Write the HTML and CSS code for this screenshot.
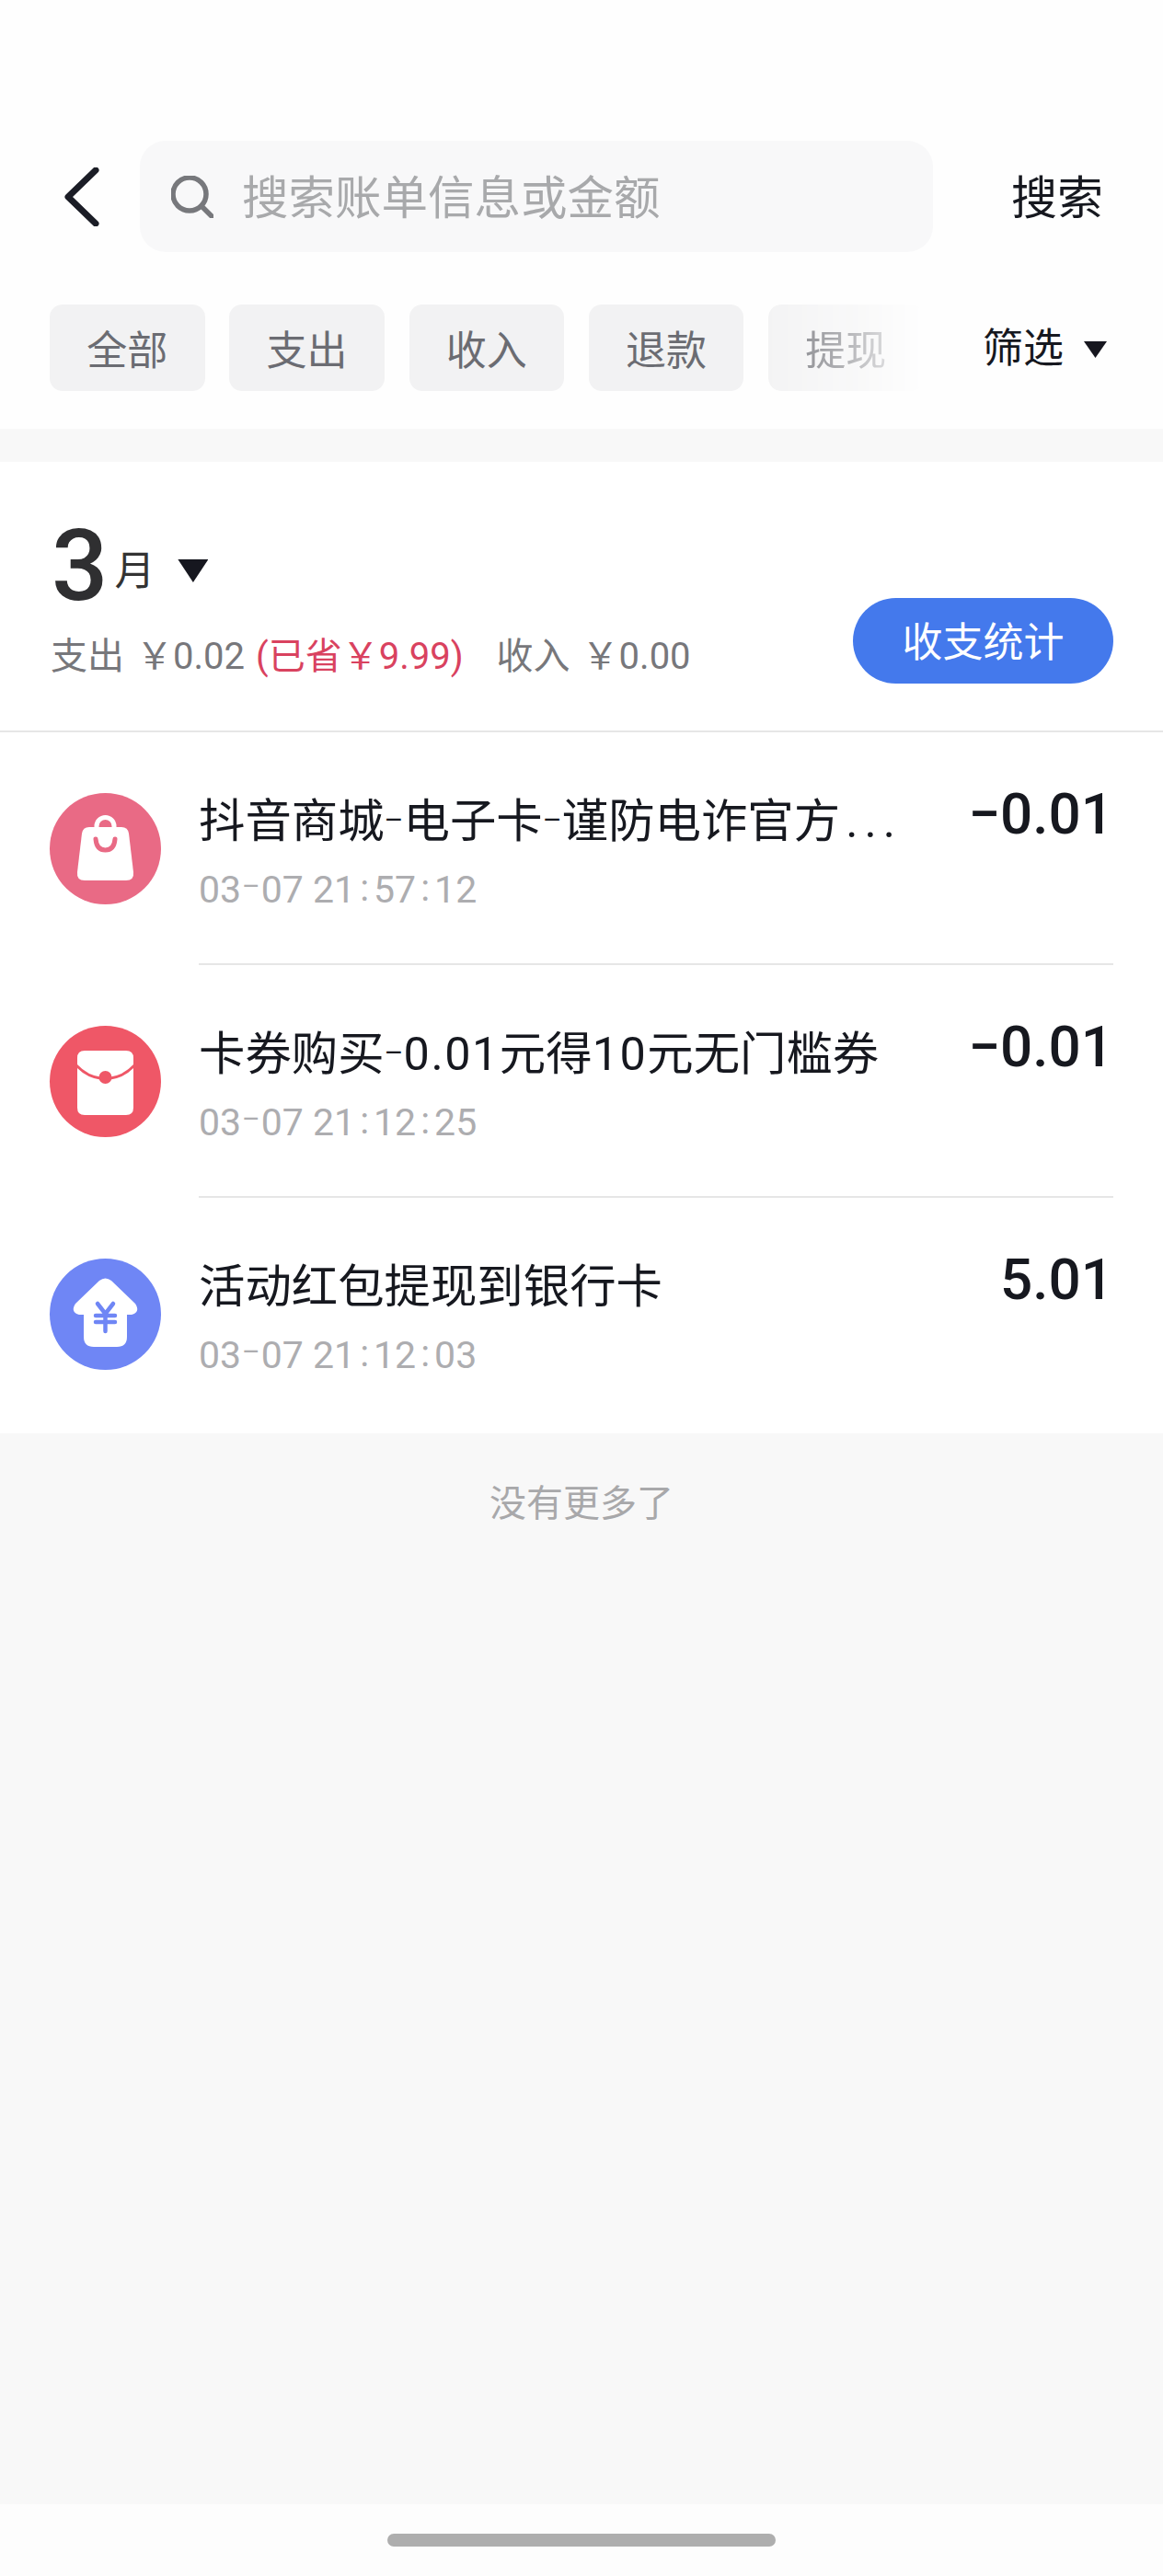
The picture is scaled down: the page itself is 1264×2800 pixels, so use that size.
FILE: index.html
```html
<!DOCTYPE html>
<html lang="zh-CN">
<head>
    <meta charset="UTF-8">
    <meta name="viewport" content="width=device-width, initial-scale=1.0">
    <title>账单</title>
    <link rel="stylesheet" href="styles.css">
</head>
<body>
    <div class="page">
        <header class="top">
            <div class="search-row">
                <svg class="back" viewBox="0 0 38 64"><path d="M34 3 L4 32 L34 61"/></svg>
                <div class="search-box">
                    <svg class="search-icon" viewBox="0 0 46 46"><circle cx="20" cy="20" r="18"/><path d="M33 33 L44 44"/></svg>
                    <span class="placeholder">搜索账单信息或金额</span>
                </div>
                <span class="search-btn">搜索</span>
            </div>
            <div class="filter-row">
                <ul class="chips">
                    <li>全部</li>
                    <li>支出</li>
                    <li>收入</li>
                    <li>退款</li>
                    <li>提现</li>
                </ul>
                <div class="filter">筛选<i class="tri tri-small"></i></div>
            </div>
        </header>

        <section class="bill">
            <div class="summary">
                <div>
                    <div class="month"><b>3</b><span>月</span><i class="tri tri-big"></i></div>
                    <div class="totals">
                        <span>支出</span><span class="money">￥0.02</span><span class="saved">(已省￥9.99)</span><span class="income">收入</span><span class="money">￥0.00</span>
                    </div>
                </div>
                <a class="stats-btn">收支统计</a>
            </div>

            <ul class="records">
                <li class="record">
                    <span class="badge badge-shop">
                        <svg viewBox="0 0 121 121"><path d="M51 38 V36 a9.500 9.500 0 0 1 19 0 V38" fill="none" stroke="#fff" stroke-width="5"/><path d="M43 37 H78 Q85 37 86 44 L91 86 Q92 95 83 95 H38 Q29 95 30 86 L35 44 Q36 37 43 37 Z" fill="#fff"/><path d="M50 50 Q51 62 60.500 62 Q70 62 71 50" fill="none" stroke="#e96a85" stroke-width="5" stroke-linecap="round"/></svg>
                    </span>
                    <div class="info">
                        <p class="name">抖音商城<i class="dash">–</i>电子卡<i class="dash">–</i>谨防电诈官方<span class="dots">...</span></p>
                        <p class="time">03<i class="dash">–</i>07 21<i class="colon">:</i>57<i class="colon">:</i>12</p>
                    </div>
                    <span class="amount">−0.01</span>
                </li>
                <li class="record">
                    <span class="badge badge-gift">
                        <svg viewBox="0 0 121 121"><path d="M38 27 H83 Q91 27 91 35 V42 Q80 54 64 56 H57 Q41 54 30 42 V35 Q30 27 38 27 Z" fill="#fff"/><path d="M30 46 Q41 57 57 59 H64 Q80 57 91 46 V89 Q91 97 83 97 H38 Q30 97 30 89 Z" fill="#fff"/><circle cx="60.500" cy="56" r="7" fill="#ef5767"/></svg>
                    </span>
                    <div class="info">
                        <p class="name">卡券购买<i class="dash">–</i><span class="num">0.01</span>元得<span class="num">10</span>元无门槛券</p>
                        <p class="time">03<i class="dash">–</i>07 21<i class="colon">:</i>12<i class="colon">:</i>25</p>
                    </div>
                    <span class="amount">−0.01</span>
                </li>
                <li class="record">
                    <span class="badge badge-cash">
                        <svg viewBox="0 0 121 121"><path d="M54 24 Q60.500 19 67 24 L93 49 Q99 58 89 61 H84 V85 Q84 96 73 96 H48 Q37 96 37 85 V61 H32 Q22 58 28 49 Z" fill="#fff"/><path d="M52 49 L60.500 60 L69 49 M50 62 H71 M50 69 H71 M60.500 60 V79" fill="none" stroke="#6f86f5" stroke-width="4.500" stroke-linecap="round"/></svg>
                    </span>
                    <div class="info">
                        <p class="name">活动红包提现到银行卡</p>
                        <p class="time">03<i class="dash">–</i>07 21<i class="colon">:</i>12<i class="colon">:</i>03</p>
                    </div>
                    <span class="amount">5.01</span>
                </li>
            </ul>
        </section>

        <p class="no-more">没有更多了</p>

        <div class="home-area"><span class="home-bar"></span></div>
    </div>
</body>
</html>
```

FILE: styles.css
```css
*{
    margin: 0;
    padding: 0;
    box-sizing: border-box;
    list-style: none;
}

body{
    background-color: #f8f8f8;
    font-family: "Roboto", "Noto Sans CJK SC", sans-serif;
    color: #16181f;
}

.page{
    height: 2800px;
    display: flex;
    flex-direction: column;
}

/* search and filters */
.top{
    height: 466px;
    background-color: #fefefe;
    padding-top: 153px;
}

.search-row{
    display: flex;
    align-items: center;
    height: 121px;
    padding-left: 70px;
}

.back{
    width: 38px;
    height: 64px;
    fill: none;
    stroke: #1b1d26;
    stroke-width: 7;
    stroke-linecap: round;
    stroke-linejoin: round;
}

.search-box{
    width: 862px;
    height: 121px;
    margin-left: 44px;
    padding-left: 34px;
    border-radius: 28px;
    background-color: #f8f8f9;
    display: flex;
    align-items: center;
}

.search-icon{
    width: 46px;
    height: 46px;
    fill: none;
    stroke: #77787c;
    stroke-width: 5.500;
    stroke-linecap: round;
}

.placeholder{
    margin-left: 31px;
    margin-top: -6px;
    font-size: 50.500px;
    color: #a8a9ab;
}

.search-btn{
    margin-left: 85px;
    margin-top: -6px;
    font-size: 50px;
}

.filter-row{
    display: flex;
    align-items: center;
    height: 94px;
    margin-top: 57px;
    padding-left: 54px;
}

.chips{
    display: flex;
    gap: 26.750px;
    width: 950px;
    overflow: hidden;
}

.chips li{
    flex: 0 0 168.500px;
    height: 94px;
    border-radius: 14px;
    background-color: #f2f2f3;
    color: #6b6c72;
    font-size: 44px;
    line-height: 102px;
    text-align: center;
}

/* last chip fades out under the filter button */
.chips li:nth-child(5){
    -webkit-mask-image: linear-gradient(to right, rgba(0,0,0,.9), rgba(0,0,0,.55) 45%, transparent 100%);
    mask-image: linear-gradient(to right, rgba(0,0,0,.9), rgba(0,0,0,.55) 45%, transparent 100%);
}

.filter{
    display: flex;
    align-items: center;
    margin-left: 64px;
    margin-top: -6px;
    font-size: 44px;
}

.tri{
    display: block;
    background-color: #16171f;
    clip-path: polygon(0 0, 100% 0, 50% 100%);
}

.tri-small{
    width: 25px;
    height: 18px;
    margin-left: 22px;
    margin-top: 10px;
}

.tri-big{
    width: 33px;
    height: 25px;
    margin-left: 25px;
    margin-top: 11px;
}

/* month block */
.bill{
    margin-top: 36px;
    background-color: #fff;
}

.summary{
    height: 294px;
    padding: 0 54px 0 56px;
    border-bottom: 2px solid #e6e6e6;
    display: flex;
    justify-content: space-between;
}

.month{
    display: flex;
    align-items: center;
    height: 110px;
    margin-top: 58px;
}

.month b{
    font-size: 108px;
    font-weight: 500;
    line-height: 110px;
    color: #2f2f31;
    margin-right: 7px;
}

.month span{
    font-size: 44px;
    color: #333;
    margin-top: 4px;
}

.totals{
    display: flex;
    align-items: center;
    margin-top: 19px;
    margin-left: -1px;
    font-size: 40px;
    line-height: 50px;
    color: #77777b;
}

.money{
    margin-left: 13px;
}

.saved{
    margin-left: 12px;
    color: #d9425f;
}

.income{
    margin-left: 36px;
}

.stats-btn{
    width: 283px;
    height: 93px;
    margin-top: 148px;
    border-radius: 47px;
    background-color: #4479ec;
    color: #fff;
    font-size: 44px;
    line-height: 98px;
    text-align: center;
}

/* records */
.record{
    height: 253px;
    margin-left: 54px;
    padding: 66px 54px 0 0;
    position: relative;
    display: flex;
    align-items: flex-start;
}

.record + .record::before{
    content: "";
    position: absolute;
    top: -2px;
    left: 162px;
    right: 54px;
    height: 2px;
    background-color: #e6e6e6;
}

.record:last-child{
    height: 256px;
}

.badge{
    flex: 0 0 121px;
    height: 121px;
    border-radius: 50%;
}

.badge svg{
    display: block;
    width: 121px;
    height: 121px;
}

.badge-shop{ background-color: #e96a85; }
.badge-gift{ background-color: #ef5767; }
.badge-cash{ background-color: #6f86f5; }

.info{
    margin-left: 41px;
    margin-top: 1px;
    flex: 1;
}

.name{
    font-size: 50.400px;
    line-height: 60px;
}

.time{
    margin-top: 19px;
    font-size: 41px;
    line-height: 50px;
    color: #adadb0;
}

/* hyphens and colons are wider in the app font than in Roboto */
.dash{
    font-size: 32px;
    font-style: normal;
    line-height: 1;
    vertical-align: .26em;
}

.time .dash{
    font-size: 30px;
    margin: 0 1px;
}

.colon{
    font-style: normal;
    line-height: 1;
    margin: 0 5px;
    vertical-align: 2px;
}

.num{
    letter-spacing: 1.500px;
}

.dots{
    letter-spacing: 7px;
    margin-left: 6px;
}

.amount{
    margin-top: -12px;
    font-size: 62px;
    font-weight: 500;
    line-height: 70px;
}

.no-more{
    margin-top: 52px;
    font-size: 40px;
    line-height: 50px;
    color: #a8a8aa;
    text-align: center;
}

.home-area{
    margin-top: auto;
    height: 78px;
    background-color: #fdfdfd;
    display: flex;
    justify-content: center;
    padding-top: 32px;
}

.home-bar{
    width: 422px;
    height: 14px;
    border-radius: 7px;
    background-color: #aeaeae;
}
```
